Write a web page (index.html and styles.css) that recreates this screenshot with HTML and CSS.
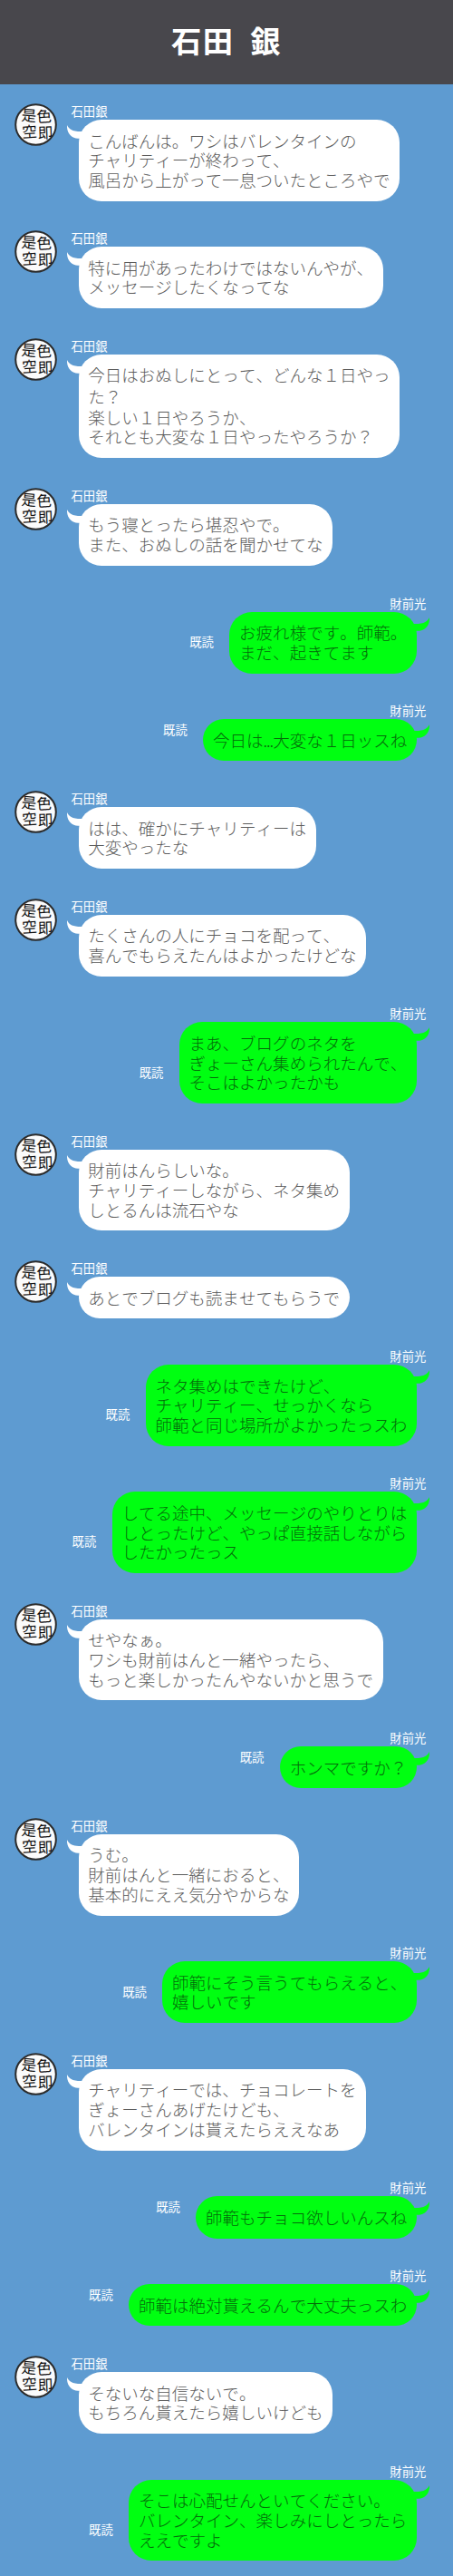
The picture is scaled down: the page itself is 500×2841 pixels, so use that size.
FILE: index.html
```html
<!DOCTYPE html>
<html lang="ja">
<head>
    <meta charset="UTF-8">
    <meta name="viewport" content="width=device-width, initial-scale=1.0">
    <title>石田 銀</title>
    <link rel="stylesheet" href="styles.css">
</head>
<body>
    <svg class="defs">
        <symbol id="icon" viewBox="0 0 47 47">
            <circle cx="23.5" cy="23.5" r="22.3" fill="#fbfbfb" stroke="#2b2b2b" stroke-width="2"/>
            <g class="stamp">
                <text x="16" y="19.5" transform="rotate(5 16 14)">是</text>
                <text x="16.5" y="37.5" transform="rotate(-4 16 31)">空</text>
                <text x="32.5" y="20.5" transform="rotate(-4 32 15)">色</text>
                <text x="34" y="38.5" transform="rotate(-2 34 32)">即</text>
            </g>
        </symbol>
        <symbol id="tail" viewBox="0 0 18 15">
            <path d="M0 0 C2 4.5 6 7.5 18 7 L18 14.8 L12 14.8 C5 14.5 -0.5 9 0 0 Z"/>
        </symbol>
    </svg>

    <header><h1>石田 銀</h1></header>

    <div id="chat">
        <div class="left">
            <svg class="icon"><use href="#icon"/></svg>
            <div class="box">
                <div class="name">石田銀</div>
                <p class="fukidashi"><svg class="tail"><use href="#tail"/></svg>こんばんは。ワシはバレンタインの<br>チャリティーが終わって、<br>風呂から上がって一息ついたところやで</p>
            </div>
        </div>
        <div class="left">
            <svg class="icon"><use href="#icon"/></svg>
            <div class="box">
                <div class="name">石田銀</div>
                <p class="fukidashi"><svg class="tail"><use href="#tail"/></svg>特に用があったわけではないんやが、<br>メッセージしたくなってな</p>
            </div>
        </div>
        <div class="left">
            <svg class="icon"><use href="#icon"/></svg>
            <div class="box">
                <div class="name">石田銀</div>
                <p class="fukidashi"><svg class="tail"><use href="#tail"/></svg>今日はおぬしにとって、どんな１日やっ<span class="wrap">た？</span>楽しい１日やろうか、<br>それとも大変な１日やったやろうか？</p>
            </div>
        </div>
        <div class="left">
            <svg class="icon"><use href="#icon"/></svg>
            <div class="box">
                <div class="name">石田銀</div>
                <p class="fukidashi"><svg class="tail"><use href="#tail"/></svg>もう寝とったら堪忍やで。<br>また、おぬしの話を聞かせてな</p>
            </div>
        </div>
        <div class="right">
            <div class="name">財前光</div>
            <div class="row">
                <span class="kidoku">既読</span>
                <p class="fukidashi"><svg class="tail"><use href="#tail"/></svg>お疲れ様です。師範。<br>まだ、起きてます</p>
            </div>
        </div>
        <div class="right">
            <div class="name">財前光</div>
            <div class="row">
                <span class="kidoku">既読</span>
                <p class="fukidashi"><svg class="tail"><use href="#tail"/></svg>今日は<span class="dots">...</span>大変な１日ッスね</p>
            </div>
        </div>
        <div class="left">
            <svg class="icon"><use href="#icon"/></svg>
            <div class="box">
                <div class="name">石田銀</div>
                <p class="fukidashi"><svg class="tail"><use href="#tail"/></svg>はは、確かにチャリティーは<br>大変やったな</p>
            </div>
        </div>
        <div class="left">
            <svg class="icon"><use href="#icon"/></svg>
            <div class="box">
                <div class="name">石田銀</div>
                <p class="fukidashi"><svg class="tail"><use href="#tail"/></svg>たくさんの人にチョコを配って、<br>喜んでもらえたんはよかったけどな</p>
            </div>
        </div>
        <div class="right">
            <div class="name">財前光</div>
            <div class="row">
                <span class="kidoku">既読</span>
                <p class="fukidashi"><svg class="tail"><use href="#tail"/></svg>まあ、ブログのネタを<br>ぎょーさん集められたんで、<br>そこはよかったかも</p>
            </div>
        </div>
        <div class="left">
            <svg class="icon"><use href="#icon"/></svg>
            <div class="box">
                <div class="name">石田銀</div>
                <p class="fukidashi"><svg class="tail"><use href="#tail"/></svg>財前はんらしいな。<br>チャリティーしながら、ネタ集め<br>しとるんは流石やな</p>
            </div>
        </div>
        <div class="left">
            <svg class="icon"><use href="#icon"/></svg>
            <div class="box">
                <div class="name">石田銀</div>
                <p class="fukidashi"><svg class="tail"><use href="#tail"/></svg>あとでブログも読ませてもらうで</p>
            </div>
        </div>
        <div class="right">
            <div class="name">財前光</div>
            <div class="row">
                <span class="kidoku">既読</span>
                <p class="fukidashi"><svg class="tail"><use href="#tail"/></svg>ネタ集めはできたけど、<br>チャリティー、せっかくなら<br>師範と同じ場所がよかったっスわ</p>
            </div>
        </div>
        <div class="right">
            <div class="name">財前光</div>
            <div class="row">
                <span class="kidoku">既読</span>
                <p class="fukidashi"><svg class="tail"><use href="#tail"/></svg>してる途中、メッセージのやりとりは<br>しとったけど、やっぱ直接話しながら<br>したかったっス</p>
            </div>
        </div>
        <div class="left">
            <svg class="icon"><use href="#icon"/></svg>
            <div class="box">
                <div class="name">石田銀</div>
                <p class="fukidashi"><svg class="tail"><use href="#tail"/></svg>せやなぁ。<br>ワシも財前はんと一緒やったら、<br>もっと楽しかったんやないかと思うで</p>
            </div>
        </div>
        <div class="right">
            <div class="name">財前光</div>
            <div class="row">
                <span class="kidoku">既読</span>
                <p class="fukidashi"><svg class="tail"><use href="#tail"/></svg>ホンマですか？</p>
            </div>
        </div>
        <div class="left">
            <svg class="icon"><use href="#icon"/></svg>
            <div class="box">
                <div class="name">石田銀</div>
                <p class="fukidashi"><svg class="tail"><use href="#tail"/></svg>うむ。<br>財前はんと一緒におると、<br>基本的にええ気分やからな</p>
            </div>
        </div>
        <div class="right">
            <div class="name">財前光</div>
            <div class="row">
                <span class="kidoku">既読</span>
                <p class="fukidashi"><svg class="tail"><use href="#tail"/></svg>師範にそう言うてもらえると、<br>嬉しいです</p>
            </div>
        </div>
        <div class="left">
            <svg class="icon"><use href="#icon"/></svg>
            <div class="box">
                <div class="name">石田銀</div>
                <p class="fukidashi"><svg class="tail"><use href="#tail"/></svg>チャリティーでは、チョコレートを<br>ぎょーさんあげたけども、<br>バレンタインは貰えたらええなあ</p>
            </div>
        </div>
        <div class="right">
            <div class="name">財前光</div>
            <div class="row">
                <span class="kidoku">既読</span>
                <p class="fukidashi"><svg class="tail"><use href="#tail"/></svg>師範もチョコ欲しいんスね</p>
            </div>
        </div>
        <div class="right">
            <div class="name">財前光</div>
            <div class="row">
                <span class="kidoku">既読</span>
                <p class="fukidashi"><svg class="tail"><use href="#tail"/></svg>師範は絶対貰えるんで大丈夫っスわ</p>
            </div>
        </div>
        <div class="left">
            <svg class="icon"><use href="#icon"/></svg>
            <div class="box">
                <div class="name">石田銀</div>
                <p class="fukidashi"><svg class="tail"><use href="#tail"/></svg>そないな自信ないで。<br>もちろん貰えたら嬉しいけども</p>
            </div>
        </div>
        <div class="right">
            <div class="name">財前光</div>
            <div class="row">
                <span class="kidoku">既読</span>
                <p class="fukidashi"><svg class="tail"><use href="#tail"/></svg>そこは心配せんといてください。<br>バレンタイン、楽しみにしとったら<br>ええですよ</p>
            </div>
        </div>
    </div>
</body>
</html>
```
FILE: styles.css
```css
body {
    margin: 0;
    background: #5e9bd1;
    font-family: "Noto Sans CJK JP", sans-serif;
    font-weight: 300;
    font-kerning: none;
}

.defs {
    display: none;
}

header {
    height: 93px;
    background: #48474c;
}

h1 {
    margin: 0;
    color: #fff;
    font-size: 33.3px;
    line-height: 88px;
    letter-spacing: 1.7px;
    word-spacing: 8px;
    text-align: center;
}

#chat {
    padding-top: 21px;
    padding-bottom: 16px;
}

.left {
    display: flex;
    padding-left: 16px;
    margin-bottom: 32.71px;
}

.right {
    margin-bottom: 32.71px;
}

.left:last-child, .right:last-child {
    margin-bottom: 0;
}

.icon {
    flex: none;
    width: 47px;
    height: 47px;
    margin-right: 15.5px;
}

.stamp {
    fill: #111;
    font-size: 16.5px;
    font-weight: 400;
    text-anchor: middle;
}

.name, .kidoku {
    color: #fff;
    font-size: 13.33px;
    line-height: 18px;
    font-weight: 400;
}

.right .name {
    padding-right: 29.7px;
    text-align: right;
}

.row {
    display: flex;
    justify-content: flex-end;
    align-items: flex-end;
    padding-right: 40px;
}

.kidoku {
    margin: 0 17.5px 25.5px 0;
}

.fukidashi {
    position: relative;
    width: fit-content;
    margin: 0;
    padding: 12.5px 10.75px 12.1px;
    border-radius: 25px;
    font-size: 18.52px;
    line-height: 21.67px;
    white-space: nowrap;
}

.left .fukidashi {
    margin-left: 8px;
    background: #fff;
    color: #5c5c5c;
}

.right .fukidashi {
    background: #00ff11;
    color: #056a0a;
}

/* しっぽ */
.tail {
    position: absolute;
    top: 6px;
    left: -12.5px;
    width: 18px;
    height: 15px;
    fill: #fff;
}

.right .tail {
    left: auto;
    right: -13.5px;
    fill: #00ff11;
    transform: scaleX(-1);
}

.wrap {
    display: block;
    padding: 2px 0 1px;
}

.dots {
    letter-spacing: -1.1px;
}
```
